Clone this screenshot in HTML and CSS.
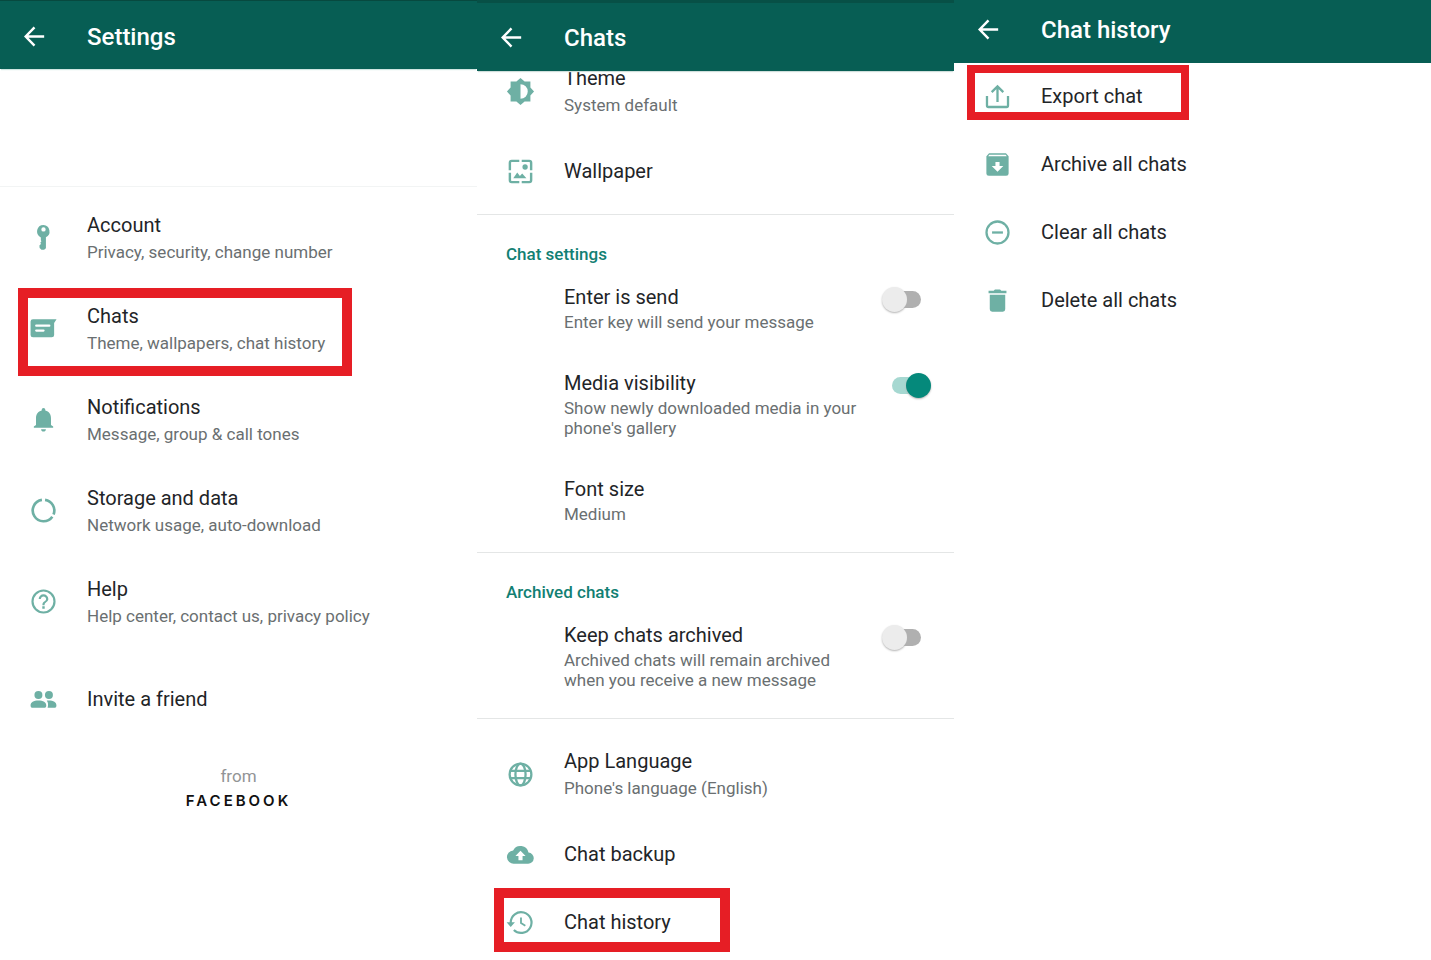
FILE: index.html
```html
<!DOCTYPE html>
<html lang="en">
<head>
<meta charset="utf-8">
<meta name="viewport" content="width=device-width, initial-scale=1">
<title>Settings</title>
<link rel="stylesheet" href="styles.css">
</head>
<body>
<main class="screens">

  <section class="screen">
    <header class="bar bar-settings">
      <button class="back" type="button" aria-label="Back"><svg class="icon" viewBox="0 0 24 24"><path d="M20 12H5M12 4.500L4.700 12l7.300 7.500" fill="none" stroke="currentColor" stroke-width="2"/></svg></button>
      <h1 class="bar-title">Settings</h1>
    </header>
    <div class="profile"></div>
    <nav class="list list-main">
      <a class="row" href="#account">
        <svg class="icon" viewBox="0 0 24 24"><path fill-rule="evenodd" d="M12 1.600a5.400 5.400 0 0 0-2.200 10.300v2.300l.5.900-.9 1.100.5 1.100-1.300 1.400.2 2 1.500 1.500h2.200l1.500-1.400v-9A5.400 5.400 0 0 0 12 1.600zm0 1.900a1.800 1.800 0 1 1 0 3.600 1.800 1.800 0 0 1 0-3.600z"/></svg>
        <span class="text"><span class="title">Account</span><span class="sub">Privacy, security, change number</span></span>
      </a>
      <a class="row" href="#chats">
        <svg class="icon" viewBox="0 0 24 24"><path fill-rule="evenodd" d="M3.300 4.300h19.500L20.800 7.500v9.800a2 2 0 0 1-2 2H3.300a2 2 0 0 1-2-2V6.300a2 2 0 0 1 2-2zM6 8.700a.9.9 0 0 0 0 1.900h10.800a.9.9 0 0 0 0-1.900zm0 4.100a.9.9 0 0 0 0 1.900h6a.9.9 0 0 0 0-1.900z"/></svg>
        <span class="text"><span class="title">Chats</span><span class="sub">Theme, wallpapers, chat history</span></span>
        <span class="mark mark-chats"></span>
      </a>
      <a class="row" href="#notifications">
        <svg class="icon" viewBox="0 0 24 24"><path d="M12 22c1.100 0 2-.9 2-2h-4c0 1.100.9 2 2 2zm6.200-5.500V11c0-3.100-1.600-5.700-4.700-6.400v-.7a1.500 1.500 0 0 0-3 0v.7c-3.100.7-4.700 3.300-4.700 6.400v5.500L4 17.700v1.200h16v-1.200z"/></svg>
        <span class="text"><span class="title">Notifications</span><span class="sub">Message, group &amp; call tones</span></span>
      </a>
      <a class="row" href="#storage">
        <svg class="icon" viewBox="0 0 24 24"><g fill="none" stroke="currentColor" stroke-width="2.200"><path d="M13.300 3.200A8.900 8.900 0 0 1 20.300 15.300"/><path d="M19.300 17.100A8.900 8.900 0 1 1 10.700 3.200"/></g></svg>
        <span class="text"><span class="title">Storage and data</span><span class="sub">Network usage, auto-download</span></span>
      </a>
      <a class="row" href="#help">
        <svg class="icon" viewBox="0 0 24 24"><path d="M11 18h2v-2h-2v2zm1-16a10 10 0 1 0 0 20 10 10 0 0 0 0-20zm0 18.200a8.200 8.200 0 1 1 0-16.400 8.200 8.200 0 0 1 0 16.400zM12 6a4 4 0 0 0-4 4h1.800c0-1.200 1-2.200 2.200-2.200s2.200 1 2.200 2.200c0 2-3.100 1.800-3.100 5h1.800c0-2.300 3.100-2.500 3.100-5a4 4 0 0 0-4-4z"/></svg>
        <span class="text"><span class="title">Help</span><span class="sub">Help center, contact us, privacy policy</span></span>
      </a>
      <a class="row row-single row-invite" href="#invite">
        <svg class="icon" viewBox="0 0 24 24"><circle cx="7.800" cy="8.200" r="3.300"/><circle cx="16.500" cy="8.200" r="3.300"/><path d="M1.300 17c0-3 2.500-4.200 6.500-4.200s6.500 1.200 6.500 4.200c0 1.200-.6 1.900-1.800 1.900H3.100c-1.200 0-1.800-.7-1.800-1.900zM14.700 12.900c5-.4 8 1 8 4.100 0 1.200-.6 1.900-1.800 1.900h-5.500c.6-2.400.6-4.200-.7-6z"/></svg>
        <span class="text"><span class="title">Invite a friend</span></span>
      </a>
    </nav>
    <footer class="from"><span class="from-label">from</span><span class="brand">FACEBOOK</span></footer>
  </section>

  <section class="screen">
    <header class="bar bar-chats">
      <button class="back" type="button" aria-label="Back"><svg class="icon" viewBox="0 0 24 24"><path d="M20 12H5M12 4.500L4.700 12l7.300 7.500" fill="none" stroke="currentColor" stroke-width="2"/></svg></button>
      <h1 class="bar-title">Chats</h1>
    </header>
    <nav class="list list-scrolled">
      <a class="row" href="#theme">
        <svg class="icon" viewBox="0 0 24 24"><path fill-rule="evenodd" d="M20.200 8.600V3.800h-4.800L12 .8l-3.400 3H3.800v4.800L.8 12l3 3.400v4.800h4.800l3.400 3 3.400-3h4.800v-4.800l3-3.400zM12 18V6a6 6 0 0 1 0 12z"/></svg>
        <span class="text"><span class="title">Theme</span><span class="sub">System default</span></span>
      </a>
      <a class="row row-single" href="#wallpaper">
        <svg class="icon" viewBox="0 0 24 24"><g fill="none" stroke="currentColor" stroke-width="2"><path d="M11 3.200H4.700Q3.200 3.200 3.200 4.700V11M13 3.200h6.300q1.500 0 1.500 1.500V11M3.200 13v6.300q0 1.500 1.500 1.500H11M20.800 13v6.300q0 1.500-1.500 1.500H13"/></g><circle cx="15.800" cy="8.300" r="2.200"/><path d="M6 17.500l3.300-4.700 2.200 2.900 1.900-2 3.500 3.800z"/></svg>
        <span class="text"><span class="title">Wallpaper</span></span>
      </a>
    </nav>
    <section class="group">
      <h2 class="group-title">Chat settings</h2>
      <label class="option">
        <span class="text"><span class="title">Enter is send</span><span class="sub">Enter key will send your message</span></span>
        <input class="switch" type="checkbox" role="switch">
      </label>
      <label class="option">
        <span class="text"><span class="title">Media visibility</span><span class="sub">Show newly downloaded media in your phone's gallery</span></span>
        <input class="switch" type="checkbox" role="switch" checked>
      </label>
      <button class="option" type="button">
        <span class="text"><span class="title">Font size</span><span class="sub">Medium</span></span>
      </button>
    </section>
    <section class="group">
      <h2 class="group-title">Archived chats</h2>
      <label class="option">
        <span class="text"><span class="title">Keep chats archived</span><span class="sub">Archived chats will remain archived when you receive a new message</span></span>
        <input class="switch" type="checkbox" role="switch">
      </label>
    </section>
    <nav class="list list-divided">
      <a class="row" href="#language">
        <svg class="icon" viewBox="0 0 24 24"><g fill="none" stroke="currentColor" stroke-width="1.900"><circle cx="12" cy="12" r="9"/><ellipse cx="12" cy="12" rx="4.200" ry="9"/><path d="M3.500 9h17M3.500 15h17"/></g></svg>
        <span class="text"><span class="title">App Language</span><span class="sub">Phone's language (English)</span></span>
      </a>
      <a class="row row-single" href="#backup">
        <svg class="icon" viewBox="0 0 24 24"><path fill-rule="evenodd" d="M18.600 10.400A6.800 6.800 0 0 0 5.900 8.600 5.500 5.500 0 0 0 6.700 19.600h11.400a4.600 4.600 0 0 0 .5-9.200zM13.700 13.300v3.500h-3.400v-3.500H7.800L12 8.900l4.200 4.400z"/></svg>
        <span class="text"><span class="title">Chat backup</span></span>
      </a>
      <a class="row row-single" href="#history">
        <svg class="icon" viewBox="0 0 24 24"><g fill="none" stroke="currentColor" stroke-width="1.800"><path d="M3.900 13.500V12a8.600 8.600 0 1 1 2.600 6.200"/><path d="M12.400 7.800v4.700l3.600 2.200" stroke-width="1.500"/></g><path d="M.5 11.800h6.900l-3.500 4z"/></svg>
        <span class="text"><span class="title">Chat history</span></span>
        <span class="mark mark-history"></span>
      </a>
    </nav>
  </section>

  <section class="screen">
    <header class="bar bar-history">
      <button class="back" type="button" aria-label="Back"><svg class="icon" viewBox="0 0 24 24"><path d="M20 12H5M12 4.500L4.700 12l7.300 7.500" fill="none" stroke="currentColor" stroke-width="2"/></svg></button>
      <h1 class="bar-title">Chat history</h1>
    </header>
    <nav class="list list-history">
      <a class="row row-single" href="#export">
        <svg class="icon" viewBox="0 0 24 24"><g fill="none" stroke="currentColor" stroke-width="1.900"><path d="M3.300 11.500v8q0 1.200 1.200 1.200h15q1.200 0 1.200-1.200v-8M12 16.500V4M7.200 8.400L12 3.700l4.800 4.700"/></g></svg>
        <span class="text"><span class="title">Export chat</span></span>
        <span class="mark mark-export"></span>
      </a>
      <a class="row row-single" href="#archive">
        <svg class="icon" viewBox="0 0 24 24"><path fill-rule="evenodd" d="M5 2.700h14l2.200 2.400v14.300a2 2 0 0 1-2 2H4.800a2 2 0 0 1-2-2V5.100zM5.200 3.900l-.9 1.300h15.400l-.9-1.300zM10.300 10v3.200H7.200l4.800 4.700 4.800-4.700h-3.100V10z"/></svg>
        <span class="text"><span class="title">Archive all chats</span></span>
      </a>
      <a class="row row-single" href="#clear">
        <svg class="icon" viewBox="0 0 24 24"><g fill="none" stroke="currentColor" stroke-width="1.900"><circle cx="12" cy="12" r="9.100"/><path d="M7.500 12h9"/></g></svg>
        <span class="text"><span class="title">Clear all chats</span></span>
      </a>
      <a class="row row-single" href="#delete">
        <svg class="icon" viewBox="0 0 24 24"><path d="M5.600 7.300h12.800v12a2 2 0 0 1-2 2H7.600a2 2 0 0 1-2-2zM4.600 4h4.200l1.100-1.100h4.200L15.200 4h4.200v2H4.600z"/></svg>
        <span class="text"><span class="title">Delete all chats</span></span>
      </a>
    </nav>
  </section>

</main>
</body>
</html>
```

FILE: styles.css
```css
* {
  box-sizing: border-box;
}

body {
  margin: 0;
  background: #fff;
  color: #1f2528;
  font-family: Roboto, "Liberation Sans", sans-serif;
}

.screens {
  display: grid;
  grid-template-columns: repeat(3, minmax(0, 1fr));
}

.screen {
  display: flex;
  flex-direction: column;
}

.bar {
  position: relative;
  z-index: 1;
  display: flex;
  align-items: center;
  gap: 38px;
  padding: 17px 20px;
  background: #075e54;
  color: #fff;
}

.bar-settings {
  padding: 21px 20px 16px;
  border-top: 1px solid #07493f;
  box-shadow: 0 2px 1px -1px #cfe6e2;
}

.bar-chats {
  padding: 20px 20px 17px;
  border-top: 3px solid #075046;
  box-shadow: 0 2px 1px -1px #cfdedb;
}

.bar-history {
  padding: 15px 20px 17px;
}

.bar-title {
  margin: 0;
  font-size: 24px;
  font-weight: 500;
  line-height: 31px;
}

.back {
  display: flex;
  padding: 0 0 2px;
  border: 0;
  background: none;
  color: #fff;
}

.icon {
  flex: none;
  width: 29px;
  height: 29px;
  fill: currentColor;
}

.profile {
  height: 118px;
  border-bottom: 1px solid #f2f4f4;
}

.list {
  display: flex;
  flex-direction: column;
}

.list-main {
  padding-top: 6px;
}

.list-main .row:not(.row-single) .icon {
  margin-bottom: 3px;
}

.list-scrolled {
  margin-top: -25px;
  padding-bottom: 9px;
}

.list-divided {
  padding-top: 10px;
  border-top: 1px solid #e4e6e6;
}

.list-history {
  margin-top: -1px;
}

.row {
  position: relative;
  display: flex;
  align-items: center;
  gap: 29px;
  min-height: 91px;
  padding: 0 29px;
  color: #6eb0a4;
  text-decoration: none;
}

.row-single {
  min-height: 68px;
}

.row-invite {
  margin-top: 17px;
}

.text {
  display: flex;
  flex: 1;
  flex-direction: column;
}

.title {
  color: #1f2528;
  font-size: 20px;
  line-height: 27px;
}

.sub {
  color: #6a6f71;
  font-size: 17px;
  line-height: 27px;
}

.group {
  padding-bottom: 10px;
  border-top: 1px solid #e4e6e6;
}

.group-title {
  margin: 0;
  padding: 29px 29px 0;
  color: #128073;
  font-size: 17px;
  font-weight: 500;
  line-height: 20px;
}

.option {
  display: flex;
  align-items: flex-start;
  gap: 16px;
  width: 100%;
  padding: 18px 23px 18px 87px;
  border: 0;
  background: none;
  font: inherit;
  text-align: left;
}

.option .title {
  line-height: 30px;
}

.option .sub {
  line-height: 20px;
}

.switch {
  position: relative;
  flex: none;
  width: 49px;
  height: 25px;
  margin: 5px 0 0;
  appearance: none;
}

.switch::before {
  content: "";
  position: absolute;
  inset: 4px 10px;
  border-radius: 9px;
  background: #b0b0b0;
}

.switch::after {
  content: "";
  position: absolute;
  top: 0;
  left: 0;
  width: 25px;
  height: 25px;
  border-radius: 50%;
  background: #ececec;
  box-shadow: 0 1px 2px #b4b4b4;
}

.switch:checked::before {
  background: #a6d8d1;
}

.switch:checked::after {
  left: 24px;
  background: #05897b;
}

.mark {
  position: absolute;
  border: 10px solid #e61e25;
  pointer-events: none;
}

.mark-chats {
  top: 4px;
  left: 18px;
  width: 334px;
  height: 88px;
}

.mark-history {
  top: 0;
  left: 17px;
  width: 236px;
  height: 64px;
}

.mark-export {
  top: 3px;
  left: 13px;
  width: 222px;
  height: 55px;
  border-width: 8px;
}

.from {
  display: flex;
  flex-direction: column;
  align-items: center;
  margin-top: 31px;
}

.from-label {
  color: #929496;
  font-size: 17px;
  line-height: 24px;
}

.brand {
  color: #111;
  font-family: Inter, Lato, sans-serif;
  font-size: 15px;
  font-weight: 600;
  letter-spacing: 3px;
  line-height: 26px;
}
```
